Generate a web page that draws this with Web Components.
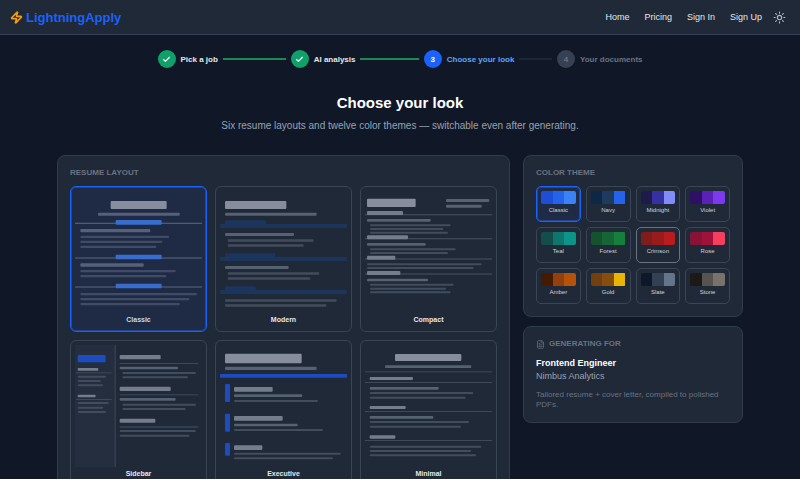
<!DOCTYPE html>
<html lang="en">
<head>
<meta charset="utf-8">
<meta name="viewport" content="width=device-width, initial-scale=1">
<title>LightningApply - Choose your look</title>
<style>
  :root {
    --page: #101827;
    --surface: #202937;
    --line: #303c4c;
    --primary: #1a62fa;
    --text: #e5e7eb;
    --text-soft: #99a1af;
    --text-dim: #6a7282;
  }
  body {
    margin: 0;
    background: var(--page);
    color: var(--text);
    font-family: "Liberation Sans", Arial, sans-serif;
    font-size: 9px;
  }
</style>
</head>
<body>
<look-page></look-page>

<script>
class SiteHeader extends HTMLElement {
  constructor() {
    super();
    this.attachShadow({ mode: 'open' });
    this.shadowRoot.innerHTML = `
      <style>
        :host { display: block; }
        header {
          display: flex;
          align-items: center;
          justify-content: space-between;
          height: 34px;
          padding: 0 14px 0 10px;
          background: var(--surface);
          border-bottom: 1px solid #364153;
        }
        a { color: inherit; text-decoration: none; }
        .logo {
          display: flex;
          align-items: center;
          gap: 3px;
          color: var(--primary);
          font-size: 13px;
          font-weight: bold;
        }
        svg { display: block; width: 13px; height: 13px; fill: none; stroke: currentColor;
          stroke-width: 2; stroke-linecap: round; stroke-linejoin: round; }
        .logo svg { color: #f0a010; stroke-width: 3; }
        nav { display: flex; align-items: center; gap: 15px; }
        button { padding: 0; margin-left: -4px; border: 0; background: none; color: #b4bac5; cursor: pointer; }
      </style>
      <header>
        <a class="logo" href="#">
          <svg viewBox="0 0 24 24"><path d="M4 14a1 1 0 0 1-.78-1.63l9.9-10.2a.5.5 0 0 1 .86.46l-1.92 6.02A1 1 0 0 0 13 10h7a1 1 0 0 1 .78 1.63l-9.9 10.2a.5.5 0 0 1-.86-.46l1.92-6.02A1 1 0 0 0 11 14z"/></svg>
          <span>LightningApply</span>
        </a>
        <nav>
          <a href="#">Home</a>
          <a href="#">Pricing</a>
          <a href="#">Sign In</a>
          <a href="#">Sign Up</a>
          <button type="button" aria-label="Toggle theme">
            <svg viewBox="0 0 24 24"><circle cx="12" cy="12" r="4"/><path d="M12 2v2M12 20v2M4.93 4.93l1.41 1.41M17.66 17.66l1.41 1.41M2 12h2M20 12h2M6.34 17.66l-1.41 1.41M19.07 4.93l-1.41 1.41"/></svg>
          </button>
        </nav>
      </header>
    `;
  }
}

class WizardStep extends HTMLElement {
  connectedCallback() {
    const state = this.getAttribute('state');
    const mark = state === 'done'
      ? '<svg viewBox="0 0 24 24"><path d="M20 6 9 17l-5-5"/></svg>'
      : this.getAttribute('number');
    this.attachShadow({ mode: 'open' }).innerHTML = `
      <style>
        :host {
          display: flex;
          flex: 1;
          align-items: center;
          gap: 5px;
          font-size: 8px;
          font-weight: bold;
          white-space: nowrap;
          color: var(--text-dim);
        }
        :host(:last-child) { flex: none; }
        :host(:last-child) .bar { display: none; }
        .dot {
          display: flex;
          align-items: center;
          justify-content: center;
          width: 18px;
          height: 18px;
          border-radius: 50%;
          background: #364153;
        }
        .bar { flex: 1; height: 2px; margin-right: 5px; background: #1c2635; }
        svg { width: 9px; height: 9px; fill: none; stroke: #fff; stroke-width: 3;
          stroke-linecap: round; stroke-linejoin: round; }
        :host([state="done"]) { color: var(--text); }
        :host([state="done"]) .dot { background: #10a069; }
        :host([state="done"]) .bar { background: #1f8753; }
        :host([state="current"]) { color: #5ea4fb; }
        :host([state="current"]) .dot { background: var(--primary); color: #fff; }
      </style>
      <span class="dot">${mark}</span>
      <slot></slot>
      <span class="bar"></span>
    `;
  }
}

class PanelCard extends HTMLElement {
  constructor() {
    super();
    this.attachShadow({ mode: 'open' });
    this.shadowRoot.innerHTML = `
      <style>
        :host {
          display: block;
          padding: 12px;
          background: var(--surface);
          border: 1px solid var(--line);
          border-radius: 8px;
        }
        h2 {
          display: flex;
          align-items: center;
          gap: 4px;
          margin: 0 0 8px;
          font-size: 8px;
          line-height: 10px;
          color: var(--text-dim);
          text-transform: uppercase;
        }
      </style>
      <h2><slot name="icon"></slot><slot name="title"></slot></h2>
      <slot></slot>
    `;
  }
}

// bar kinds: n = name, t = title, s = subtitle, l = text line, r = rule, a/b = accent, f = faded accent, p = pane
// each bar is [kind, x, y, width, height] on a 381 x 366 sheet
const LAYOUTS = {
  Classic: [
    ['n', 107, 30, 168, 24], ['s', 69, 65, 245, 9],
    ['r', 0, 95, 381, 4], ['b', 122, 87, 138, 14],
    ['s', 16, 114, 210, 10], ['l', 16, 134, 266, 7], ['l', 16, 149, 246, 7], ['l', 16, 164, 228, 7],
    ['r', 0, 199, 381, 4], ['b', 122, 191, 138, 14],
    ['s', 16, 217, 190, 10], ['l', 16, 237, 286, 7], ['l', 16, 252, 258, 7],
    ['r', 0, 286, 381, 4], ['b', 122, 278, 138, 14],
    ['l', 16, 306, 350, 7], ['l', 16, 321, 327, 7], ['l', 16, 336, 298, 7]
  ],
  Modern: [
    ['n', 15, 30, 184, 24], ['s', 15, 65, 275, 9],
    ['f', 0, 99, 381, 12], ['f', 15, 88, 123, 14],
    ['s', 15, 126, 207, 9], ['l', 23, 145, 258, 7], ['l', 23, 160, 228, 7],
    ['f', 0, 198, 381, 12], ['f', 15, 187, 151, 14],
    ['s', 15, 225, 191, 9], ['l', 23, 244, 275, 7], ['l', 23, 259, 248, 7],
    ['f', 0, 297, 381, 12], ['f', 15, 286, 92, 14],
    ['l', 15, 325, 335, 7], ['l', 15, 340, 304, 7]
  ],
  Compact: [
    ['n', 6, 23, 146, 25], ['s', 243, 24, 130, 9], ['s', 243, 41, 107, 9],
    ['r', 0, 69, 381, 4], ['t', 6, 60, 108, 12],
    ['s', 6, 84, 191, 8], ['l', 15, 100, 242, 6], ['l', 15, 111, 220, 6], ['l', 15, 122, 234, 6],
    ['r', 0, 141, 381, 4], ['t', 6, 133, 123, 12],
    ['s', 6, 156, 176, 8], ['l', 15, 172, 257, 6], ['l', 15, 183, 234, 6],
    ['r', 0, 202, 381, 4], ['t', 6, 194, 85, 12],
    ['l', 6, 217, 344, 6], ['l', 6, 228, 320, 6],
    ['r', 0, 247, 381, 4], ['t', 6, 240, 100, 12],
    ['s', 6, 263, 183, 8], ['l', 15, 278, 251, 6], ['l', 15, 290, 228, 6], ['l', 15, 301, 242, 6]
  ],
  Sidebar: [
    ['p', 0, 0, 120, 366], ['r', 119, 0, 3, 366],
    ['a', 8, 30, 84, 22], ['t', 8, 69, 62, 8], ['r', 3, 82, 107, 3],
    ['l', 8, 92, 85, 6], ['l', 8, 105, 69, 6], ['l', 8, 118, 76, 6],
    ['t', 8, 149, 54, 8], ['r', 3, 162, 107, 3],
    ['l', 8, 171, 93, 6], ['l', 8, 185, 77, 6], ['l', 8, 198, 85, 6],
    ['t', 134, 30, 123, 13], ['r', 134, 54, 236, 3], ['s', 134, 65, 175, 8], ['l', 142, 81, 221, 6], ['l', 142, 94, 197, 6],
    ['t', 134, 125, 153, 13], ['r', 134, 148, 236, 3], ['s', 134, 159, 168, 8], ['l', 142, 176, 221, 6], ['l', 142, 189, 190, 6],
    ['t', 134, 221, 107, 12], ['r', 134, 244, 236, 4], ['l', 134, 255, 228, 6], ['l', 134, 269, 210, 6]
  ],
  Executive: [
    ['n', 15, 26, 230, 29], ['s', 15, 65, 275, 10], ['a', 0, 87, 381, 11],
    ['a', 15, 117, 15, 54], ['t', 42, 126, 116, 14], ['s', 42, 148, 205, 8], ['l', 42, 165, 252, 6],
    ['a', 15, 206, 15, 54], ['t', 42, 213, 146, 14], ['s', 42, 236, 191, 8], ['l', 42, 252, 267, 6],
    ['a', 15, 294, 15, 38], ['t', 42, 301, 85, 14], ['l', 42, 323, 320, 6], ['l', 42, 337, 297, 6]
  ],
  Minimal: [
    ['n', 90, 27, 199, 21], ['s', 60, 61, 259, 8], ['r', 0, 79, 381, 3],
    ['t', 14, 96, 130, 9], ['r', 0, 111, 381, 3], ['s', 14, 126, 207, 8], ['l', 14, 141, 311, 6], ['l', 14, 155, 288, 6],
    ['t', 14, 183, 108, 9], ['r', 0, 198, 381, 3], ['s', 14, 213, 191, 8], ['l', 14, 228, 298, 6], ['l', 14, 242, 274, 6],
    ['t', 14, 271, 77, 10], ['r', 0, 285, 381, 3], ['l', 14, 302, 335, 6], ['l', 14, 315, 304, 6], ['l', 14, 328, 319, 6]
  ]
};

class LayoutOption extends HTMLElement {
  connectedCallback() {
    const name = this.getAttribute('name');
    const bars = LAYOUTS[name].map(([kind, x, y, w, h]) =>
      `<rect class="${kind}" x="${x}" y="${y}" width="${w}" height="${h}" rx="${/[rp]/.test(kind) ? 0 : 3}"/>`
    ).join('');
    this.attachShadow({ mode: 'open' }).innerHTML = `
      <style>
        :host { display: block; }
        button {
          display: block;
          width: 100%;
          padding: 4px;
          border: 1px solid #394555;
          border-radius: 6px;
          background: none;
          color: var(--text);
          font: bold 7px/14px "Liberation Sans", Arial, sans-serif;
          text-align: center;
          cursor: pointer;
        }
        button[aria-pressed="true"] {
          border-color: var(--primary);
          box-shadow: inset 0 0 0 1px #1a62fa80;
          background: #1f2a45;
          color: #bedbff;
        }
        svg { display: block; width: 100%; height: auto; }
        .n { fill: #868e9e; }
        .t { fill: #737d8c; }
        .s { fill: #566171; }
        .l { fill: #414c5c; }
        .r { fill: #3d4959; }
        .a { fill: #1d4bc0; }
        .b { fill: #386dce; }
        .f { fill: #1c355d; }
        .p { fill: #252e3f; }
        [aria-pressed="true"] .s { fill: #566179; }
        [aria-pressed="true"] .l { fill: #404b66; }
        [aria-pressed="true"] .r { fill: #4e5a71; }
      </style>
      <button type="button" aria-pressed="${this.hasAttribute('selected')}">
        <svg viewBox="0 0 381 366" aria-hidden="true">${bars}</svg>
        <span>${name}</span>
      </button>
    `;
  }
}

class ThemeOption extends HTMLElement {
  connectedCallback() {
    const colors = this.getAttribute('colors').split(' ');
    this.attachShadow({ mode: 'open' }).innerHTML = `
      <style>
        :host { display: block; }
        button {
          display: flex;
          flex-direction: column;
          gap: 2px;
          width: 100%;
          padding: 4px 4px 6px;
          border: 1px solid #3a4656;
          border-radius: 5px;
          background: none;
          color: #d1d5dc;
          font: 6px/9px "Liberation Sans", Arial, sans-serif;
          text-align: center;
          cursor: pointer;
        }
        button[aria-pressed="true"] {
          border-color: var(--primary);
          box-shadow: inset 0 0 0 1px #1a62fa80;
          background: #1f2a45;
        }
        :host([active]) button { border-color: #6a7282; }
        .colors { display: flex; height: 13px; border-radius: 2px; overflow: hidden; }
        .colors i { flex: 1; }
        .colors, .name { width: 100%; }
      </style>
      <button type="button" aria-pressed="${this.hasAttribute('selected')}">
        <span class="colors">${colors.map(c => `<i style="background:${c}"></i>`).join('')}</span>
        <span class="name">${this.getAttribute('name')}</span>
      </button>
    `;
  }
}

class LookPage extends HTMLElement {
  constructor() {
    super();
    this.attachShadow({ mode: 'open' });
    this.shadowRoot.innerHTML = `
      <style>
        :host { display: block; }
        main { max-width: 686px; margin: 0 auto; padding: 15px 16px 24px; }
        .steps { display: flex; max-width: 485px; margin: 0 auto 25px; }
        h1 { margin: 0 0 6px; color: #fff; font-size: 15px; line-height: 20px; text-align: center; }
        .lead { margin: 0 0 22px; color: var(--text-soft); font-size: 10px; line-height: 14px; text-align: center; }
        .columns { display: grid; grid-template-columns: minmax(0, 1fr) 220px; gap: 13px; align-items: start; }
        .layouts { display: grid; grid-template-columns: repeat(3, 1fr); gap: 8px; }
        .themes { display: grid; grid-template-columns: repeat(4, 1fr); gap: 5px; }
        aside { display: grid; gap: 9px; }
        .doc { display: block; width: 9px; height: 9px; fill: none; stroke: currentColor; stroke-width: 2;
          stroke-linecap: round; stroke-linejoin: round; }
        p { margin: 0; line-height: 13px; }
        .job { color: #fff; font-weight: bold; }
        .company { color: var(--text-soft); }
        .note { margin-top: 7px; color: var(--text-dim); font-size: 8px; line-height: 10px; }
      </style>
      <site-header></site-header>
      <main>
        <div class="steps">
          <wizard-step state="done" number="1">Pick a job</wizard-step>
          <wizard-step state="done" number="2">AI analysis</wizard-step>
          <wizard-step state="current" number="3">Choose your look</wizard-step>
          <wizard-step number="4">Your documents</wizard-step>
        </div>
        <h1>Choose your look</h1>
        <p class="lead">Six resume layouts and twelve color themes — switchable even after generating.</p>
        <div class="columns">
          <panel-card>
            <span slot="title">Resume layout</span>
            <div class="layouts">
              <layout-option name="Classic" selected></layout-option>
              <layout-option name="Modern"></layout-option>
              <layout-option name="Compact"></layout-option>
              <layout-option name="Sidebar"></layout-option>
              <layout-option name="Executive"></layout-option>
              <layout-option name="Minimal"></layout-option>
            </div>
          </panel-card>
          <aside>
            <panel-card>
              <span slot="title">Color theme</span>
              <div class="themes">
                <theme-option name="Classic" colors="#1d4ed8 #2563eb #3b82f6" selected></theme-option>
                <theme-option name="Navy" colors="#0f2747 #1e3a5f #2563eb"></theme-option>
                <theme-option name="Midnight" colors="#1e1b4b #3730a3 #818cf8"></theme-option>
                <theme-option name="Violet" colors="#2e1065 #5b21b6 #7c3aed"></theme-option>
                <theme-option name="Teal" colors="#134e4a #0f766e #0d9488"></theme-option>
                <theme-option name="Forest" colors="#14532d #166534 #15803d"></theme-option>
                <theme-option name="Crimson" colors="#7f1d1d #991b1b #b91c1c" active></theme-option>
                <theme-option name="Rose" colors="#881337 #9f1239 #f43f5e"></theme-option>
                <theme-option name="Amber" colors="#451a03 #92400e #b45309"></theme-option>
                <theme-option name="Gold" colors="#713f12 #854d0e #eab308"></theme-option>
                <theme-option name="Slate" colors="#0f172a #334155 #64748b"></theme-option>
                <theme-option name="Stone" colors="#1c1917 #57534e #78716c"></theme-option>
              </div>
            </panel-card>
            <panel-card>
              <svg class="doc" slot="icon" viewBox="0 0 24 24"><path d="M15 2H6a2 2 0 0 0-2 2v16a2 2 0 0 0 2 2h12a2 2 0 0 0 2-2V7Z"/><path d="M14 2v4a2 2 0 0 0 2 2h4M10 9H8M16 13H8M16 17H8"/></svg>
              <span slot="title">Generating for</span>
              <p class="job">Frontend Engineer</p>
              <p class="company">Nimbus Analytics</p>
              <p class="note">Tailored resume + cover letter, compiled to polished PDFs.</p>
            </panel-card>
          </aside>
        </div>
      </main>
    `;
  }
}

customElements.define('site-header', SiteHeader);
customElements.define('wizard-step', WizardStep);
customElements.define('panel-card', PanelCard);
customElements.define('layout-option', LayoutOption);
customElements.define('theme-option', ThemeOption);
customElements.define('look-page', LookPage);
</script>
</body>
</html>
